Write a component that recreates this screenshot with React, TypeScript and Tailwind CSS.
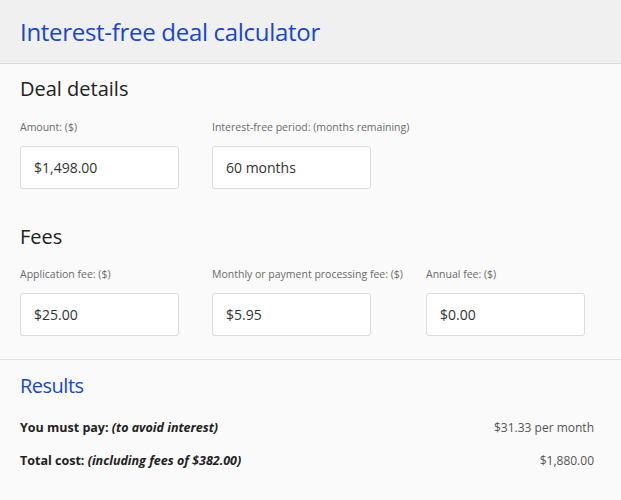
import React from "react"

function Field({ label, value, wide }: { label: string; value: string; wide?: boolean }) {
  return (
    <div className={wide ? "w-[214px] shrink-0" : "w-[192px] shrink-0"}>
      <div className="h-[14px] text-[10.5px] leading-[14px] text-[#6b6b6b] whitespace-nowrap">{label}</div>
      <div className="mt-[12px] flex h-[43px] w-[159px] items-center rounded-[3px] border border-[#dcdcdc] bg-white px-[13px] text-[14px] text-[#333]">
        {value}
      </div>
    </div>
  )
}

export default function App() {
  return (
    <div className="min-h-[500px] w-[621px] bg-[#fafafa]" style={{ fontFamily: '"Open Sans", "Liberation Sans", sans-serif' }}>
      <header className="flex h-[64px] items-center border-b border-[#dadada] bg-[#f0f0f0] px-[20px]">
        <h1 className="text-[24px] tracking-[-0.3px] text-[#1746d4]">Interest-free deal calculator</h1>
      </header>

      <section className="border-b border-[#e2e2e2] px-[20px] pb-[23px] pt-[11px]">
        <h2 className="text-[20px] leading-[28px] text-[#222]">Deal details</h2>
        <div className="mt-[17px] flex">
          <Field label="Amount: ($)" value="$1,498.00" />
          <Field label="Interest-free period: (months remaining)" value="60 months" />
        </div>

        <h2 className="mt-[34px] text-[20px] leading-[28px] text-[#222]">Fees</h2>
        <div className="mt-[16px] flex">
          <Field label="Application fee: ($)" value="$25.00" />
          <Field label="Monthly or payment processing fee: ($)" value="$5.95" wide />
          <Field label="Annual fee: ($)" value="$0.00" />
        </div>
      </section>

      <section className="px-[20px] pt-[12px]">
        <h2 className="text-[20px] leading-[28px] tracking-[-0.5px] text-[#1746d4]">Results</h2>
        <div className="mt-[19px] flex items-center justify-between pr-[7px] text-[12.5px] text-[#222]">
          <span className="font-bold">
            You must pay: <i>(to avoid interest)</i>
          </span>
          <span className="text-[12px] text-[#555]">$31.33 per month</span>
        </div>
        <div className="mt-[14px] flex items-center justify-between pr-[7px] text-[12.5px] text-[#222]">
          <span className="font-bold">
            Total cost: <i>(including fees of $382.00)</i>
          </span>
          <span className="text-[12px] text-[#555]">$1,880.00</span>
        </div>
      </section>
    </div>
  )
}
